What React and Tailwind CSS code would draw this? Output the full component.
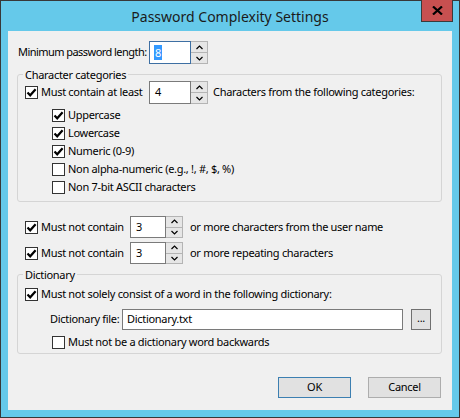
import React from "react";

const FONT = { fontFamily: '"Noto Sans", "Open Sans", Arial, sans-serif' };

function Check({ checked }) {
  return (
    <span className="flex h-[13px] w-[13px] shrink-0 items-center justify-center border border-[#333333] bg-white">
      {checked && (
        <svg width="11" height="11" viewBox="0 0 11 11">
          <path d="M1.5 5.5 L4.2 8.3 L9.6 2.2" fill="none" stroke="#000" strokeWidth="2.2" />
        </svg>
      )}
    </span>
  );
}

function Spin() {
  return (
    <div className="flex h-full w-[17px] flex-col gap-[1px] bg-[#b4b4b4] p-[1px] pl-0">
      <div className="flex flex-1 items-center justify-center bg-[#e6e6e6]">
        <svg width="7" height="5" viewBox="0 0 7 5">
          <path d="M0.5 4 L3.5 1 L6.5 4" fill="none" stroke="#000" strokeWidth="1.2" />
        </svg>
      </div>
      <div className="flex flex-1 items-center justify-center bg-[#e6e6e6]">
        <svg width="7" height="5" viewBox="0 0 7 5">
          <path d="M0.5 1 L3.5 4 L6.5 1" fill="none" stroke="#000" strokeWidth="1.2" />
        </svg>
      </div>
    </div>
  );
}

function NumBox({ value, width, focused }) {
  return (
    <div className="flex h-full">
      <div
        className={
          focused
            ? "flex h-full items-center border border-[#3d6fa3] bg-white pl-[4px]"
            : "flex h-full items-center border border-[#7a7a7a] bg-white pl-[4px]"
        }
        style={{ width }}
      >
        {focused ? (
          <span className="bg-[#3399ff] px-[1px] leading-[15px] text-white">{value}</span>
        ) : (
          <span className="px-[1px]">{value}</span>
        )}
      </div>
      <Spin />
    </div>
  );
}

function CheckRow({ checked, label, className }) {
  return (
    <div className={"flex h-[18px] items-center gap-[3px] " + (className || "")}>
      <Check checked={checked} />
      <span className="whitespace-nowrap">{label}</span>
    </div>
  );
}

export default function App() {
  return (
    <div
      className="flex h-[418px] w-[460px] flex-col border border-[#383838] bg-[#65c9ea] text-[11px] tracking-[-0.3px] text-black"
      style={FONT}
    >
      <div className="relative flex h-[30px] items-center justify-center">
        <span className="text-[14px] tracking-normal text-[#1b1b1b]">Password Complexity Settings</span>
        <div className="absolute right-[6px] top-[-1px] flex h-[22px] w-[32px] items-center justify-center border border-[#3a3a3a] border-t-0 bg-[#c75050]">
          <svg width="11" height="9" viewBox="0 0 11 9">
            <path d="M1 0.5 L10 8.5 M10 0.5 L1 8.5" stroke="#000" strokeWidth="2.2" />
          </svg>
        </div>
      </div>

      <div className="mx-[7px] flex h-[379px] flex-col bg-[#f0f0f0]">
        <div className="mt-[10px] flex h-[23px] items-center pl-[10px]">
          <span className="w-[131px] whitespace-nowrap tracking-[-0.55px]">Minimum password length:</span>
          <NumBox value="8" width={42} focused />
        </div>

        <fieldset className="ml-[9px] mr-[10px] mt-[4px] rounded-[3px] border border-[#d5d5d5] pb-[5px]">
          <legend className="ml-[5px] px-[2px] leading-[13px]">Character categories</legend>
          <div className="flex h-[23px] items-center pl-[7px]">
            <div className="flex w-[124px] items-center gap-[3px]">
              <Check checked />
              <span className="whitespace-nowrap">Must contain at least</span>
            </div>
            <NumBox value="4" width={42} />
            <span className="ml-[5px] whitespace-nowrap">Characters from the following categories:</span>
          </div>
          <div className="mt-[2px] flex flex-col pl-[34px]">
            <CheckRow checked label="Uppercase" />
            <CheckRow checked label="Lowercase" />
            <CheckRow checked label="Numeric (0-9)" />
            <CheckRow label="Non alpha-numeric (e.g., !, #, $, %)" />
            <CheckRow label="Non 7-bit ASCII characters" />
          </div>
        </fieldset>

        <div className="mt-[14px] flex h-[22px] items-center pl-[17px]">
          <div className="flex w-[105px] items-center gap-[3px]">
            <Check checked />
            <span className="whitespace-nowrap">Must not contain</span>
          </div>
          <NumBox value="3" width={36} />
          <span className="ml-[7px] whitespace-nowrap">or more characters from the user name</span>
        </div>
        <div className="mt-[4px] flex h-[22px] items-center pl-[17px]">
          <div className="flex w-[105px] items-center gap-[3px]">
            <Check checked />
            <span className="whitespace-nowrap">Must not contain</span>
          </div>
          <NumBox value="3" width={36} />
          <span className="ml-[7px] whitespace-nowrap">or more repeating characters</span>
        </div>

        <fieldset className="ml-[9px] mr-[10px] mt-[4px] rounded-[3px] border border-[#d5d5d5] pb-[2px]">
          <legend className="ml-[5px] px-[2px] leading-[13px]">Dictionary</legend>
          <CheckRow
            checked
            label="Must not solely consist of a word in the following dictionary:"
            className="mt-[4px] pl-[7px]"
          />
          <div className="mt-[6px] flex h-[21px] items-center pl-[32px]">
            <span className="w-[72px] whitespace-nowrap">Dictionary file:</span>
            <div className="flex h-full w-[281px] items-center border border-[#7a7a7a] bg-white pl-[4px]">
              Dictionary.txt
            </div>
            <div className="ml-[8px] flex h-full w-[20px] items-center justify-center border border-[#707070] bg-[#e1e1e1] pb-[3px]">
              ...
            </div>
          </div>
          <CheckRow label="Must not be a dictionary word backwards" className="mt-[3px] pl-[34px]" />
        </fieldset>

        <div className="mt-[23px] flex justify-end gap-[17px] pr-[11px]">
          <button className="flex h-[21px] w-[73px] items-center justify-center border border-[#3c7fb1] bg-[#e1e1e1]">
            OK
          </button>
          <button className="flex h-[21px] w-[73px] items-center justify-center border border-[#adadad] bg-[#e1e1e1]">
            Cancel
          </button>
        </div>
      </div>
    </div>
  );
}
